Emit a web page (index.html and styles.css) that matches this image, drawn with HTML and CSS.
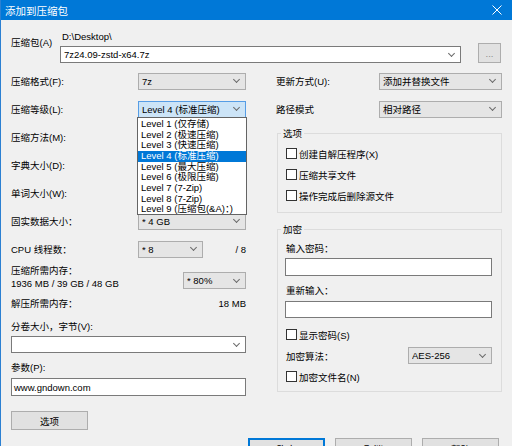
FILE: index.html
```html
<!DOCTYPE html>
<html lang="zh-CN">
<head>
<meta charset="UTF-8">
<title>添加到压缩包</title>
<link rel="stylesheet" href="styles.css">
</head>
<body>
<div class="window">
  <div class="titlebar">
    <span class="title">添加到压缩包</span>
    <svg class="close" width="10" height="10" viewBox="0 0 10 10"><path d="M0.5 0.5L9.5 9.5M9.5 0.5L0.5 9.5" stroke="#fff" stroke-width="1" fill="none"/></svg>
  </div>

  <div class="content">
    <div class="archive">
      <div class="archive-label">压缩包(A)</div>
      <div class="archive-path">
        <div class="path">D:\Desktop\</div>
        <div class="combo"><span class="val">7z24.09-zstd-x64.7z</span><span class="chev"></span></div>
      </div>
      <div class="btn browse">...</div>
    </div>

    <div class="columns">
      <div class="left">
        <div class="row"><span class="lbl">压缩格式(F):</span><div class="select"><span class="val">7z</span><span class="chev"></span></div></div>
        <div class="row"><span class="lbl">压缩等级(L):</span><div class="select focus"><span class="val">Level 4 (标准压缩)</span><span class="chev"></span></div></div>
        <div class="row"><span class="lbl">压缩方法(M):</span><div class="select"><span class="val"></span><span class="chev"></span></div></div>
        <div class="row"><span class="lbl">字典大小(D):</span><div class="select"><span class="val"></span><span class="chev"></span></div></div>
        <div class="row"><span class="lbl">单词大小(W):</span><div class="select"><span class="val"></span><span class="chev"></span></div></div>
        <div class="row"><span class="lbl">固实数据大小：</span><div class="select"><span class="val">* 4 GB</span><span class="chev"></span></div></div>
        <div class="row"><span class="lbl cpu">CPU 线程数：</span><div class="select small"><span class="val">* 8</span><span class="chev"></span></div><span class="right-text">/ 8</span></div>

        <div class="mem">
          <div class="mem-text">
            <div class="line">压缩所需内存：</div>
            <div class="line">1936 MB / 39 GB / 48 GB</div>
          </div>
          <div class="select pct"><span class="val">* 80%</span><span class="chev"></span></div>
        </div>
        <div class="line split"><span>解压所需内存：</span><span>18 MB</span></div>

        <div class="line vol-label">分卷大小，字节(V):</div>
        <div class="combo wide"><span class="val"></span><span class="chev"></span></div>
        <div class="line param-label">参数(P):</div>
        <div class="input param">www.gndown.com</div>
        <div class="btn opts">选项</div>

        <ul class="droplist">
          <li>Level 1 (仅存储)</li>
          <li>Level 2 (极速压缩)</li>
          <li>Level 3 (快速压缩)</li>
          <li class="sel">Level 4 (标准压缩)</li>
          <li>Level 5 (最大压缩)</li>
          <li>Level 6 (极限压缩)</li>
          <li>Level 7 (7-Zip)</li>
          <li>Level 8 (7-Zip)</li>
          <li>Level 9 (压缩包(&amp;A)：)</li>
        </ul>
      </div>

      <div class="right">
        <div class="row"><span class="lbl">更新方式(U):</span><div class="select"><span class="val">添加并替换文件</span><span class="chev"></span></div></div>
        <div class="row"><span class="lbl">路径模式</span><div class="select"><span class="val">相对路径</span><span class="chev"></span></div></div>

        <fieldset class="group options">
          <legend>选项</legend>
          <div class="check"><span class="box"></span>创建自解压程序(X)</div>
          <div class="check"><span class="box"></span>压缩共享文件</div>
          <div class="check"><span class="box"></span>操作完成后删除源文件</div>
        </fieldset>

        <fieldset class="group crypt">
          <legend>加密</legend>
          <div class="line pw-label">输入密码：</div>
          <div class="input pw"></div>
          <div class="line pw-label2">重新输入：</div>
          <div class="input pw2"></div>
          <div class="check show"><span class="box"></span>显示密码(S)</div>
          <div class="check algo"><span class="algo-lbl">加密算法：</span><div class="select aes"><span class="val">AES-256</span><span class="chev"></span></div></div>
          <div class="check"><span class="box"></span>加密文件名(N)</div>
        </fieldset>
      </div>
    </div>

    <div class="footer">
      <div class="btn default">确定</div>
      <div class="btn">取消</div>
      <div class="btn">帮助</div>
    </div>
  </div>
</div>
</body>
</html>
```

FILE: styles.css
```css
body {
    margin: 0;
    background: #f0f0f0;
    font-family: 'Liberation Sans', 'Noto Sans CJK SC', sans-serif;
    font-size: 9.5px;
    color: #000;
}

.window {
    width: 512px;
    height: 446px;
    overflow: hidden;
    box-sizing: border-box;
    border-left: 1px solid #2b80d2;
}

.titlebar {
    height: 20px;
    background: #0078d7;
    color: #fff;
    display: flex;
    align-items: center;
    padding: 0 10px 0 4px;
    font-size: 10.5px;
}

.title {
    flex: 1;
}

.content {
    padding: 11px 10px 0 10px;
}

/* archive name row */
.archive {
    display: flex;
    height: 36px;
}

.archive-label {
    width: 49px;
    padding-top: 6px;
    line-height: 12px;
}

.archive-path {
    width: 401px;
}

.path {
    line-height: 12px;
    padding-left: 2px;
}

.combo,
.select,
.input {
    box-sizing: border-box;
    height: 17px;
    display: flex;
    align-items: center;
    padding: 0 6px 0 3px;
    line-height: 15px;
    white-space: nowrap;
}

.combo,
.input {
    background: #fff;
    border: 1px solid #7a7a7a;
}

.archive .combo {
    margin-top: 3px;
}

.select {
    background: #e5e5e5;
    border: 1px solid #adadad;
}

.select.focus {
    background: #cce4f7;
    border-color: #569de5;
}

.val {
    flex: 1;
    overflow: hidden;
}

.chev {
    width: 4px;
    height: 4px;
    border-right: 1px solid #6a6a6a;
    border-bottom: 1px solid #6a6a6a;
    transform: rotate(45deg);
    margin: 0 0 3px 0;
}

.btn {
    box-sizing: border-box;
    background: #e1e1e1;
    border: 1px solid #adadad;
    display: flex;
    align-items: center;
    justify-content: center;
}

.browse {
    width: 23px;
    height: 20px;
    margin: 12px 0 0 17px;
    color: #8a8a8a;
}

/* two columns */
.columns {
    display: flex;
}

.left {
    width: 235px;
    position: relative;
}

.right {
    width: 226px;
    margin-left: 30px;
}

.row {
    display: flex;
    align-items: center;
    height: 28px;
}

.lbl {
    flex: 1;
}

.row .select {
    width: 108px;
}

.right .row .select {
    width: 123px;
}

.lbl.cpu {
    flex: none;
    width: 127px;
}

.row .select.small {
    width: 65px;
}

.right-text {
    margin-left: auto;
}

.line {
    line-height: 13px;
    height: 13px;
}

.mem {
    display: flex;
    margin-top: 1px;
}

.mem-text {
    flex: 1;
}

.select.pct {
    width: 63px;
    margin-top: 8px;
}

.split {
    display: flex;
    justify-content: space-between;
    margin-top: 7px;
}

.vol-label {
    margin-top: 10px;
}

.combo.wide {
    margin-top: 3px;
}

.param-label {
    margin-top: 8px;
}

.input.param {
    height: 18px;
    margin-top: 4px;
    padding-left: 2px;
}

.opts {
    width: 77px;
    height: 19px;
    margin-top: 15px;
}

/* open level list */
.droplist {
    position: absolute;
    left: 126px;
    top: 50px;
    width: 110px;
    height: 98px;
    box-sizing: border-box;
    margin: 0;
    padding: 1px 0 0;
    list-style: none;
    background: #fff;
    border: 1px solid #646464;
    z-index: 2;
}

.droplist li {
    height: 10.67px;
    line-height: 10.67px;
    padding-left: 3px;
    white-space: nowrap;
}

.droplist li.sel {
    background: #0078d7;
    color: #fff;
}

/* group boxes */
.group {
    margin: 4px 0 0 1px;
    padding: 0 9px 6px 8px;
    border: 1px solid #dcdcdc;
    min-width: 0;
}

.group legend {
    padding: 0 2px;
    margin-left: -5px;
    line-height: 13px;
}

.options {
    padding-top: 3px;
}

.check {
    display: flex;
    align-items: center;
    height: 21px;
}

.box {
    width: 11px;
    height: 11px;
    box-sizing: border-box;
    border: 1px solid #333;
    background: #fff;
    margin-right: 2px;
}

.crypt {
    margin-top: 10px;
    padding-bottom: 4px;
}

.pw-label {
    margin-top: 6px;
}

.input.pw {
    height: 18px;
    margin: 3px 0 0 -1px;
}

.pw-label2 {
    margin-top: 8px;
}

.input.pw2 {
    margin: 4px 0 0 -1px;
}

.check.show {
    margin-top: 6px;
}

.algo-lbl {
    flex: 1;
}

.select.aes {
    width: 84px;
}

/* bottom buttons */
.footer {
    display: flex;
    justify-content: flex-end;
    gap: 10px;
    margin: 8px 3px 0 0;
}

.footer .btn {
    width: 77px;
    height: 21px;
}

.btn.default {
    border-color: #0078d7;
    box-shadow: inset 0 0 0 1px #0078d7;
}
```
